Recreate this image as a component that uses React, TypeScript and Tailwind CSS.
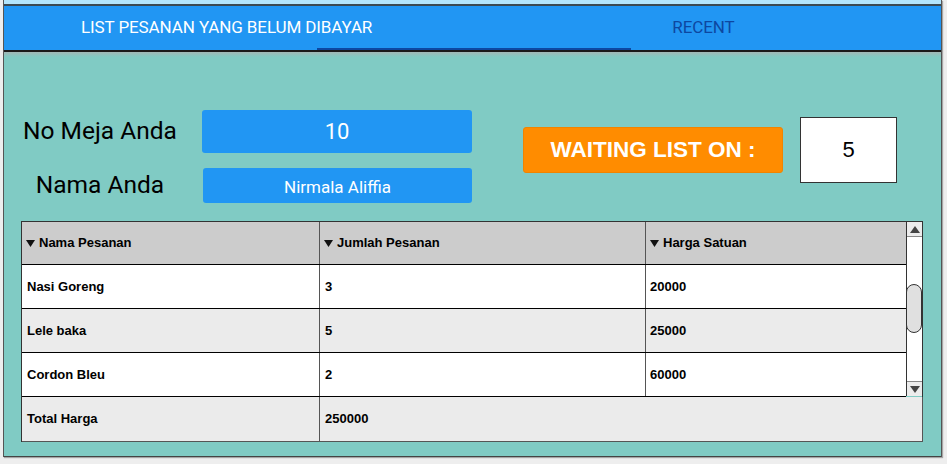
import { ReactNode } from "react";

type Row = { nama: string; jumlah: string; harga: string };

const rows: Row[] = [
  { nama: "Nasi Goreng", jumlah: "3", harga: "20000" },
  { nama: "Lele baka", jumlah: "5", harga: "25000" },
  { nama: "Cordon Bleu", jumlah: "2", harga: "60000" },
];

function HeaderCell({ children, className }: { children: ReactNode; className: string }) {
  return (
    <div className={"flex items-center pl-[4px] " + className}>
      <svg width="9" height="7" viewBox="0 0 9 7" className="mr-[4px] mt-[1px]">
        <path d="M0 0 L9 0 L4.5 7 Z" fill="#111" />
      </svg>
      <span>{children}</span>
    </div>
  );
}

function Scrollbar() {
  return (
    <div className="w-[16px] h-[174px] border-l border-[#333] bg-white flex flex-col">
      <div className="h-[15px] bg-[#ececec] border-b border-[#888] flex items-center justify-center">
        <svg width="10" height="7" viewBox="0 0 10 7">
          <path d="M5 0 L10 7 L0 7 Z" fill="#444" />
        </svg>
      </div>
      <div className="flex-1 relative">
        <div className="absolute left-[-1px] right-0 top-[47px] h-[49px] rounded-[8px] border border-[#333] bg-[#e0e0e0]" />
      </div>
      <div className="h-[15px] bg-[#ececec] border-t border-[#888] flex items-center justify-center">
        <svg width="10" height="7" viewBox="0 0 10 7">
          <path d="M0 0 L10 0 L5 7 Z" fill="#444" />
        </svg>
      </div>
    </div>
  );
}

export default function App() {
  return (
    <div className="w-[947px] h-[464px] bg-[#eeeeee] pl-[3px] overflow-hidden">
      <div className="w-[939px] border-l border-r border-[#555] shadow-[1px_1px_1px_rgba(0,0,0,0.3)]">
        {/* Top strip */}
        <div className="h-[4px] bg-[#b3e5fc]" />
        <div className="h-[2px] bg-[#3c4a52]" />

        {/* Tabs */}
        <div className="relative h-[44px] bg-[#2196f3] flex items-center font-['Roboto',sans-serif] text-[17px]">
          <div className="pl-[77px] text-white tracking-[-0.1px]">LIST PESANAN YANG BELUM DIBAYAR</div>
          <div className="ml-[300px] text-[#0d47a1] tracking-[-0.1px]">RECENT</div>
          <div className="absolute left-[313px] w-[314px] bottom-0 h-[2px] bg-[#0d47a1]" />
        </div>
        <div className="h-[2px] bg-[#1a1a1a]" />

        {/* Content panel */}
        <div className="h-[405px] border-b border-[#444] bg-[linear-gradient(to_bottom,#a3b8b6,#80cbc4_5px)] pl-[17px] pt-[58px]">
          <div className="flex items-center">
            <div className="flex flex-col font-['Roboto',sans-serif]">
              <div className="flex items-center h-[43px]">
                <div className="w-[158px] text-center text-[24.5px] leading-none text-black">No Meja Anda</div>
                <div className="ml-[23px] w-[270px] h-[43px] rounded-[3px] bg-[#2196f3] flex items-center justify-center text-white text-[22px]">
                  10
                </div>
              </div>
              <div className="flex items-center h-[35px] mt-[15px]">
                <div className="w-[158px] text-center text-[24.5px] leading-none text-black">Nama Anda</div>
                <div className="ml-[24px] w-[269px] h-[35px] rounded-[3px] bg-[#2196f3] flex items-center justify-center text-white text-[17px] pt-[5px]">
                  Nirmala Aliffia
                </div>
              </div>
            </div>

            <div className="ml-[51px] -mt-[14px] flex items-center">
              <div className="w-[260px] h-[46px] rounded-[3px] bg-[#ff8c00] border border-[#f08400] flex items-center justify-center text-white font-bold text-[22.5px] font-['Liberation_Sans',sans-serif]">
                WAITING LIST ON :
              </div>
              <div className="ml-[17px] w-[97px] h-[66px] bg-white border border-[#333] flex items-center justify-center text-[22px] text-black font-['Liberation_Sans',sans-serif]">
                5
              </div>
            </div>
          </div>

          {/* Table */}
          <div className="mt-[18px] w-[902px] border-t border-l border-[#333] font-['Liberation_Sans',sans-serif] text-[13px] font-bold text-black">
            <div className="flex">
              <div className="w-[885px]">
                <div className="flex h-[43px] bg-[#cccccc] border-b border-black">
                  <HeaderCell className="w-[298px] border-r border-[#555]">Nama Pesanan</HeaderCell>
                  <HeaderCell className="w-[326px] border-r border-[#555]">Jumlah Pesanan</HeaderCell>
                  <HeaderCell className="flex-1">Harga Satuan</HeaderCell>
                </div>
                {rows.map((r, i) => (
                  <div
                    key={r.nama}
                    className={
                      "flex h-[44px] border-b border-black " + (i % 2 === 1 ? "bg-[#ebebeb]" : "bg-white")
                    }
                  >
                    <div className="w-[298px] border-r border-[#555] flex items-center pl-[5px]">{r.nama}</div>
                    <div className="w-[326px] border-r border-[#555] flex items-center pl-[5px]">{r.jumlah}</div>
                    <div className="flex-1 flex items-center pl-[4px]">{r.harga}</div>
                  </div>
                ))}
              </div>
              <div className="border-r border-[#333]">
                <Scrollbar />
              </div>
            </div>
            <div className="flex h-[45px] w-[901px] bg-[#ebebeb] border-r border-b border-[#555]">
              <div className="w-[298px] border-r border-[#555] flex items-center pl-[5px]">Total Harga</div>
              <div className="flex-1 flex items-center pl-[5px]">250000</div>
            </div>
          </div>
        </div>
      </div>
    </div>
  );
}
